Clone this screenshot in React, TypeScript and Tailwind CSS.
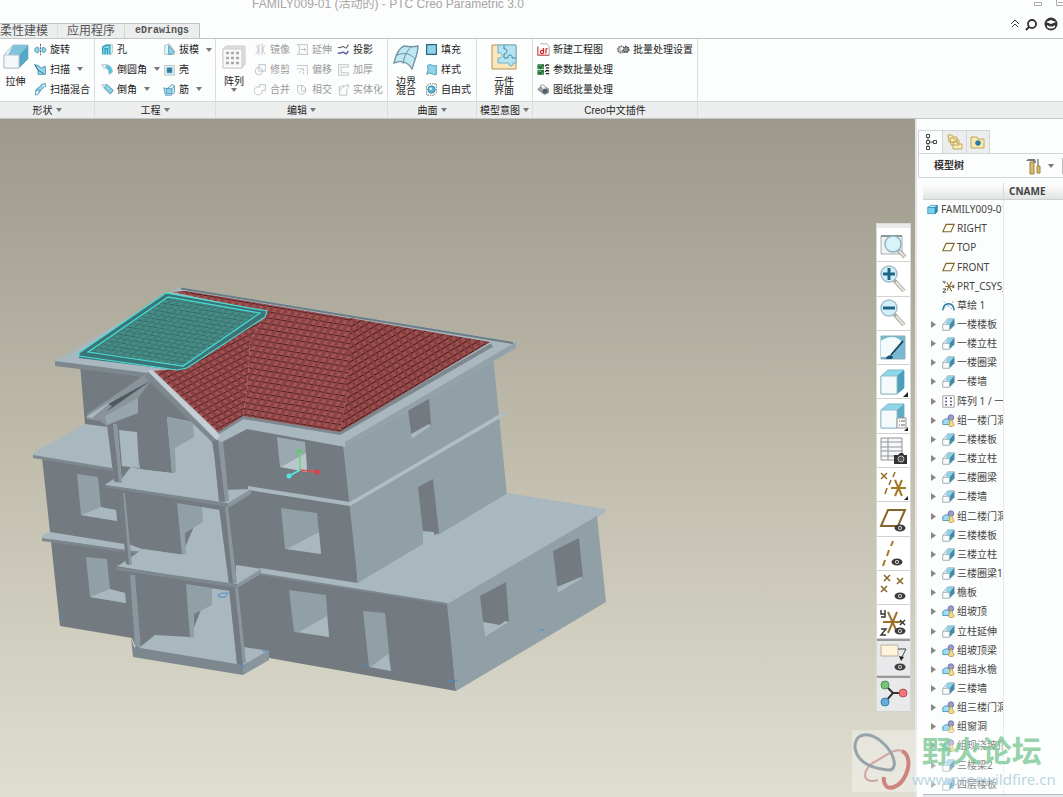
import type { ReactNode } from 'react';

type IconName = string;

const LINE = '#3f8fae';
const SKY = '#8fd4ea';
const PALE = '#dff4fb';
const GREY = '#b4b8ba';

// 16x16 glyphs used on the ribbon, in the tree and on its tabs
const glyphs: Record<IconName, ReactNode> = {
  revolve: (
    <>
      <path d="M1 8a3 3 0 0 1 5-2v5a3 3 0 0 1-5-3zM10 6a3 3 0 1 1 0 5z" fill={SKY} stroke={LINE} />
      <path d="M8 1v14" stroke="#444" strokeDasharray="3 1" />
    </>
  ),
  sweep: (
    <>
      <path d="M1 2l4 1 4 3 5-2v10H5V9z" fill={SKY} stroke={LINE} />
      <path d="M1 2l4 7 7 4" stroke="#24657f" />
    </>
  ),
  blend: (
    <>
      <path d="M2 10C3 5 8 6 9 2l5-1c1 5-5 5-6 9l-5 4z" fill={SKY} stroke={LINE} />
      <path d="M2 10l4-2v5l-4 2zM9 2l5-1v4" fill="#fff" stroke={LINE} />
    </>
  ),
  hole: (
    <>
      <path d="M2 4l4-2h8v10l-3 3" fill={PALE} stroke={GREY} />
      <path d="M2 14V5l4-2h5v11M5 14V7h3v7" fill={SKY} stroke="#24a0bd" strokeWidth="1.5" />
    </>
  ),
  round: (
    <>
      <path d="M1 2h6c5 1 7 5 7 9l-4 3C10 9 8 6 3 6z" fill={PALE} stroke={GREY} />
      <path d="M7 2c5 1 7 5 7 9l-4 3C10 9 8 7 5 5z" fill="#5fc3d8" />
    </>
  ),
  chamfer: (
    <>
      <path d="M1 2h6l8 7-4 5-8-8z" fill={PALE} stroke={GREY} />
      <path d="M7 2l8 7-3 4-8-7z" fill="#8cd8e3" stroke={LINE} />
    </>
  ),
  draft: (
    <>
      <path d="M2 3l6-2 6 9v4H2z" fill={PALE} stroke={GREY} />
      <path d="M7 3l7 8-4 3H7z" fill={SKY} stroke={LINE} />
    </>
  ),
  shell: (
    <>
      <path d="M2 3h12v12H2z" fill={PALE} stroke={GREY} />
      <path d="M5 6h6v6H5z" fill="#2f7f9c" stroke={LINE} />
    </>
  ),
  rib: (
    <>
      <path d="M1 6l4 1 6-5 3 1v9l-4 3H3z" fill={PALE} stroke={LINE} />
      <path d="M4 7h7v6H4zM11 7l3-3" fill={SKY} stroke={LINE} />
    </>
  ),
  mirror: <path d="M2 3c4 2 4 7 0 11M14 3c-4 2-4 7 0 11M6 1v14M10 1v14" stroke={GREY} />,
  trim: (
    <>
      <path d="M6 2h8v8H6z" stroke={GREY} />
      <circle cx="6" cy="10" r="4.5" stroke={GREY} />
    </>
  ),
  merge: <path d="M10 11a5 5 0 1 1-3-6V2h7v7h-4z" stroke={GREY} />,
  extend: <path d="M1 2h3v12H1M5 2h9v12H5M6 8h6M10 6l2 2-2 2" stroke={GREY} />,
  offset: (
    <>
      <path d="M1 3h13v12" stroke={GREY} />
      <path d="M1 7h8v8M4 12l6-6" stroke={GREY} strokeDasharray="3 1" />
    </>
  ),
  intersect: <path d="M2 3v5a5 5 0 1 0 9-2M2 3h4a6 6 0 0 1 6 7H7V3" stroke={GREY} />,
  project: (
    <>
      <path d="M1 5c4 3 5-3 8 0s3 0 5-3" stroke="#555" strokeWidth="1.3" />
      <path d="M1 12c4 3 5-3 8 0s3 0 5-2" stroke="#5f53a8" strokeWidth="1.8" />
    </>
  ),
  thicken: <path d="M14 2H2v13h12v-3H5V5h9z" stroke={GREY} />,
  solidify: <path d="M2 5c5 0 3-3 7-1l5-2v3l-2 3v7H3V5M3 8c4 0 3-3 6-4" stroke={GREY} />,
  fill: <path d="M2 2h12v12H2z" fill={SKY} stroke="#27677c" strokeWidth="1.5" />,
  style: <path d="M3 3c5-3 6 2 11 0v11c-4 2-6-4-12 0 2-4 2-8 1-11z" fill={SKY} stroke={LINE} />,
  freestyle: (
    <>
      <path d="M3 3l3-2h8v11l-3 3H2V3z" stroke="#666" strokeDasharray="2 1" />
      <circle cx="8" cy="8" r="4.5" fill="#5bb8d5" stroke="#297d9f" />
      <circle cx="7" cy="7" r="1.5" fill="#e4f9ff" />
    </>
  ),
  drawing: (
    <>
      <path d="M4 1h8l3 3v11H1V5" fill="#fff" stroke="#999" />
      <path d="M1 4v11h14" stroke="#c33" />
      <path d="M8 6v7M8 10a2 2 0 1 0 0 2M11 13V8c0-1 1-1 2-1" stroke="#d22" strokeWidth="1.5" />
    </>
  ),
  params: (
    <>
      <path d="M1 2h7v5H1zM1 9h7v5H1z" fill="#59b063" stroke="#28713a" />
      <path d="M2 4l2 2 4-4M2 11l2 2 4-4" stroke="#175a29" strokeWidth="1.5" />
      <path d="M10 4l2-2 3 1M10 11l2-2 3 1M11 6h4M11 13h4" stroke="#222" strokeWidth="1.5" />
    </>
  ),
  print: (
    <>
      <path d="M1 8l5-5 8 4v5l-5 2z" fill="#9ba1a6" stroke="#777" />
      <path d="M4 3l4-1 4 5-5 1z" fill="#e9f2f6" stroke="#999" />
      <circle cx="10" cy="10" r="3" fill="#4c5f6c" />
    </>
  ),
  gears: (
    <>
      <circle cx="5" cy="8" r="4" fill="#bbb" stroke="#777" strokeWidth="2" strokeDasharray="2 1" />
      <circle cx="11" cy="8" r="3.5" fill="#999" stroke="#444" strokeWidth="2" strokeDasharray="2 1" />
      <circle cx="6" cy="7" r="2" fill="#f5f5f5" />
    </>
  ),
  part: (
    <>
      <path d="M1 5l4-3h10l-3 3z" fill="#c4efff" stroke="#258cb4" />
      <path d="M1 5h11v9H1z" fill="#78cfee" stroke="#258cb4" />
      <path d="M12 5l3-3v9l-3 3z" fill="#278fb5" stroke="#257a9b" />
    </>
  ),
  plane: <path d="M5 3h10l-4 9H1z" fill="#fffdf4" stroke="#80672f" strokeWidth="1.4" />,
  csys: (
    <>
      <path d="M4 8h9M6 13l6-11M6 3l6 11" stroke="#8a6b27" strokeWidth="1.3" />
      <path d="M1 1l2 3 1-3M1 11h4l-4 4h4M13 6l2 4M15 6l-2 4" stroke="#333" />
    </>
  ),
  sketch: (
    <>
      <path d="M1 14c1-11 13-11 14 0" stroke="#267a9f" strokeWidth="1.8" />
      <path d="M2 3l12 11M14 3L2 12" stroke="#3c96b8" strokeDasharray="2 2" />
    </>
  ),
  extrude: (
    <>
      <path d="M1 8l6-7h8v8l-6 6H1z" fill="#f3f8fa" stroke="#93a4ab" />
      <path d="M7 1h8L9 8H4z" fill="#8fd0e6" />
      <path d="M15 1v8l-6 6V8z" fill="#3f8cab" />
      <path d="M1 8h8v7H1z" fill="#fbfdfd" stroke="#a8b5ba" />
    </>
  ),
  pattern: (
    <>
      <path d="M1 1h14v14H1z" fill="#fff" stroke="#8c8c98" />
      <path d="M4 4h2M10 4h2M4 8h2M10 8h2M4 12h2M10 12h2" stroke="#3a3b72" strokeWidth="2" />
    </>
  ),
  group: (
    <>
      <path d="M1 8l3-2h6v7H1z" fill="#9fdcf3" stroke="#3989aa" />
      <circle cx="11" cy="4.5" r="3.5" fill="#989cd5" stroke="#676ca6" />
      <path d="M11 5l4 9c-2 2-6 2-7 0z" fill="#f2dc8d" stroke="#b7984d" />
    </>
  ),
};

interface GlyphProps {
  name: IconName;
  className?: string;
}

function Glyph({ name, className = 'h-[13px] w-[13px]' }: GlyphProps) {
  return (
    <svg viewBox="0 0 16 16" className={`shrink-0 ${className}`} fill="none" aria-hidden="true">
      {glyphs[name]}
    </svg>
  );
}

function Caret() {
  return (
    <svg viewBox="0 0 6 4" className="h-1 w-1.5 shrink-0" aria-hidden="true">
      <path d="M0 0h6L3 4z" fill="#777" />
    </svg>
  );
}

interface Command {
  icon: IconName;
  label: string;
  menu?: boolean;
  off?: boolean;
}

function CommandColumn({ items, className = '' }: { items: Command[]; className?: string }) {
  return (
    <div className={`grid h-[60px] shrink-0 grid-rows-3 pt-px ${className}`}>
      {items.map((item) => (
        <button
          key={item.label}
          type="button"
          disabled={item.off}
          className="flex items-center gap-[3px] whitespace-nowrap text-[#222] disabled:text-[#9a9a9a]"
        >
          <Glyph name={item.icon} />
          <span>{item.label}</span>
          {item.menu && (
            <span className="ml-1">
              <Caret />
            </span>
          )}
        </button>
      ))}
    </div>
  );
}

interface BigCommandProps {
  lines: string[];
  menu?: boolean;
  className: string;
  children: ReactNode;
}

function BigCommand({ lines, menu, className, children }: BigCommandProps) {
  return (
    <button type="button" className={`flex shrink-0 flex-col items-center pt-[5px] leading-[9px] text-[#222] ${className}`}>
      <svg viewBox="0 0 26 26" className="h-[26px] w-[26px]" fill="none" aria-hidden="true">
        {children}
      </svg>
      <span className="mt-[7px]">
        {lines.map((line) => (
          <span key={line} className="block">
            {line}
          </span>
        ))}
      </span>
      {menu && (
        <span className="mt-0.5">
          <Caret />
        </span>
      )}
    </button>
  );
}

interface RibbonGroupProps {
  title: string;
  menu?: boolean;
  className: string;
  children: ReactNode;
}

function RibbonGroup({ title, menu = true, className, children }: RibbonGroupProps) {
  return (
    <section className={`flex shrink-0 flex-col border-r border-[#dadede] ${className}`}>
      <div className="flex h-[62px]">{children}</div>
      <div className="flex h-[17px] items-center justify-center gap-[3px] border-t border-[#d4d8d8] bg-[#eceeee] whitespace-nowrap text-[#222]">
        {title}
        {menu && <Caret />}
      </div>
    </section>
  );
}

function Ribbon() {
  return (
    <div className="flex border-t border-b border-[#c2c6c6] bg-[#fcfdfd]">
      <RibbonGroup title="形状" className="w-[95px]">
        <BigCommand lines={['拉伸']} className="w-[31px]">
          <path d="M1 11L10 1h15v14l-9 9H1z" fill="#e8f6fb" stroke="#a8c3cc" />
          <path d="M10 1h15l-9 10H5z" fill="#7fc3dc" />
          <path d="M25 1v14l-9 9V11z" fill="#55a9c8" />
          <path d="M1 11h15v13H1z" fill="#f4f7f8" stroke="#b9c6cb" />
        </BigCommand>
        <CommandColumn
          className="ml-[3px]"
          items={[
            { icon: 'revolve', label: '旋转' },
            { icon: 'sweep', label: '扫描', menu: true },
            { icon: 'blend', label: '扫描混合' },
          ]}
        />
      </RibbonGroup>
      <RibbonGroup title="工程" className="w-[121px]">
        <CommandColumn
          className="ml-1.5 w-[62px]"
          items={[
            { icon: 'hole', label: '孔' },
            { icon: 'round', label: '倒圆角', menu: true },
            { icon: 'chamfer', label: '倒角', menu: true },
          ]}
        />
        <CommandColumn
          items={[
            { icon: 'draft', label: '拔模', menu: true },
            { icon: 'shell', label: '壳' },
            { icon: 'rib', label: '筋', menu: true },
          ]}
        />
      </RibbonGroup>
      <RibbonGroup title="编辑" className="w-[172px]">
        <BigCommand lines={['阵列']} menu className="w-9">
          <path d="M2 5l3-3h19v18l-3 4H2z" fill="#ddd" stroke="#ccc" />
          <path d="M2 5h19v19H2z" fill="#f8f8f8" stroke="#ccc" />
          <path d="M5 9h3m2 0h3m2 0h3M5 14h3m2 0h3m2 0h3M5 19h3m2 0h3m2 0h3" stroke="#aaa" strokeWidth="2.5" />
        </BigCommand>
        <CommandColumn
          className="ml-0.5 w-[42px]"
          items={[
            { icon: 'mirror', label: '镜像', off: true },
            { icon: 'trim', label: '修剪', off: true },
            { icon: 'merge', label: '合并', off: true },
          ]}
        />
        <CommandColumn
          className="w-[41px]"
          items={[
            { icon: 'extend', label: '延伸', off: true },
            { icon: 'offset', label: '偏移', off: true },
            { icon: 'intersect', label: '相交', off: true },
          ]}
        />
        <CommandColumn
          items={[
            { icon: 'project', label: '投影' },
            { icon: 'thicken', label: '加厚', off: true },
            { icon: 'solidify', label: '实体化', off: true },
          ]}
        />
      </RibbonGroup>
      <RibbonGroup title="曲面" className="w-[89px]">
        <BigCommand lines={['边界', '混合']} className="w-9">
          <path d="M1 19C3 10 6 4 11 2c5 1 10 1 14 0 0 8-3 13-6 23-4-7-10-9-18-6z" fill="#bfe7f4" stroke="#7697a2" strokeWidth="1.4" />
          <path d="M4 11c8-3 14-1 18 4M18 3c-5 5-7 10-8 17" stroke="#6c8d99" />
        </BigCommand>
        <CommandColumn
          className="ml-px"
          items={[
            { icon: 'fill', label: '填充' },
            { icon: 'style', label: '样式' },
            { icon: 'freestyle', label: '自由式' },
          ]}
        />
      </RibbonGroup>
      <RibbonGroup title="模型意图" className="w-14">
        <BigCommand lines={['元件', '界面']} className="w-[54px]">
          <path d="M1 1h24v24H1z" fill="#fbe6bd" stroke="#b9924d" />
          <path d="M7 1h18v18h-3c1 4-5 4-4 0H7v-5c5 1 5-6 0-5z" fill="#b5e3f2" stroke="#6db0c8" />
          <path d="M13 1v4c4-1 4 5 0 5v4h4c-1-4 5-4 4 0h4" stroke="#3e86a3" />
        </BigCommand>
      </RibbonGroup>
      <RibbonGroup title="Creo中文插件" menu={false} className="w-[165px]">
        <CommandColumn
          className="ml-1 w-20"
          items={[
            { icon: 'drawing', label: '新建工程图' },
            { icon: 'params', label: '参数批量处理' },
            { icon: 'print', label: '图纸批量处理' },
          ]}
        />
        <CommandColumn items={[{ icon: 'gears', label: '批量处理设置' }]} />
      </RibbonGroup>
      <div className="flex flex-1 flex-col justify-end">
        <div className="h-[17px] border-t border-[#d4d8d8] bg-[#eceeee]" />
      </div>
    </div>
  );
}

function Header() {
  return (
    <header className="flex h-[38px] shrink-0 flex-col">
      <div className="flex h-2 items-center pl-[252px] text-[12px] leading-none whitespace-nowrap text-[#a5a5a5]">
        <h1 className="flex-1">FAMILY009-01 (活动的) - PTC Creo Parametric 3.0</h1>
        <svg viewBox="0 0 34 8" className="h-2 w-[34px]" fill="none" stroke="#aaa" aria-hidden="true">
          <path d="M5.5 2.5h7v3h-7zM27.5 0v5.5h7M29 2.5h5" />
        </svg>
      </div>
      <div className="flex flex-1 items-end justify-between">
        <nav className="flex h-[15px] border-t border-r border-[#bfc3c3] bg-[#eceeee] text-[12px] leading-[14px] whitespace-nowrap text-[#555]">
          <a href="#flex" className="w-[58px] border-r border-[#dcdfdf]">
            柔性建模
          </a>
          <a href="#apps" className="w-[67px] border-r border-[#d2d6d6] text-center">
            应用程序
          </a>
          <a href="#edrawings" className="w-[74px] text-center font-['Liberation_Mono',monospace] text-[10px] font-bold">
            eDrawings
          </a>
        </nav>
        <svg viewBox="0 0 54 20" className="mb-1 h-5 w-[54px]" fill="none" aria-hidden="true">
          <path d="M2 10l4-4 4 4M3 13l3-3 3 3" stroke="#444" />
          <circle cx="23" cy="10" r="4" stroke="#333" strokeWidth="1.8" />
          <path d="M20 13l-3 3" stroke="#333" strokeWidth="2" />
          <circle cx="42" cy="10" r="6.5" fill="#333" />
          <path d="M37 8l5-2 5 2-5 2zM38 11c3 2 6 2 8 0v2c-2 2-6 2-8 0z" fill="#fff" />
        </svg>
      </div>
    </header>
  );
}

function Eye({ x, y }: { x: number; y: number }) {
  return (
    <g>
      <ellipse cx={x} cy={y} rx="5.5" ry="3.5" fill="#3d3a3a" />
      <circle cx={x} cy={y} r="2" fill="#ddd" />
      <circle cx={x} cy={y} r="1" fill="#222" />
    </g>
  );
}

function Magnifier() {
  return (
    <>
      <path d="M15 16l10 11" stroke="#a9a9a0" strokeWidth="4" />
      <path d="M17 18l8 9" stroke="#e8e4d6" strokeWidth="2" />
      <circle cx="10" cy="10" r="8" fill="#d3f0f9" stroke="#a4bfc8" strokeWidth="1.5" />
    </>
  );
}

const tools: { label: string; pressed?: boolean; art: ReactNode }[] = [
  {
    label: '重新调整',
    art: (
      <>
        <path d="M2 6h21v18H2z" fill="#eef2f3" stroke="#aab2b5" />
        <path d="M2 6h21" stroke="#8c969b" strokeWidth="2" />
        <path d="M19 20l7 7" stroke="#a9a9a0" strokeWidth="4" />
        <path d="M20 21l6 6" stroke="#e8e4d6" strokeWidth="2" />
        <circle cx="14" cy="14" r="8" fill="#d9f3fa" stroke="#8fb6c2" strokeWidth="1.5" />
      </>
    ),
  },
  {
    label: '放大',
    art: (
      <>
        <Magnifier />
        <path d="M4 10h12M10 4v12" stroke="#1d6487" strokeWidth="3" />
      </>
    ),
  },
  {
    label: '缩小',
    art: (
      <>
        <Magnifier />
        <path d="M4 10h12" stroke="#1d6487" strokeWidth="3" />
      </>
    ),
  },
  {
    label: '重画',
    art: (
      <>
        <path d="M2 4h24v23H2z" fill="#78b9d1" stroke="#8badba" />
        <path d="M2 9c8-6 16-5 21 1L12 25H2z" fill="#f4fbfd" />
        <path d="M24 9L12 23" stroke="#153b50" strokeWidth="1.8" />
        <path d="M7 27c0-4 6-5 7-2l-1 2z" fill="#195574" />
      </>
    ),
  },
  {
    label: '显示样式',
    art: (
      <>
        <path d="M2 9l7-6h16v18l-7 6H2z" fill="#8ed6e9" stroke="#7bb7c8" />
        <path d="M18 9l7-6v18l-7 6z" fill="#4a9dbb" />
        <path d="M2 9h16v18H2z" fill="#f4fafc" stroke="#9dbcc6" />
        <path d="M29 25v5h-5z" fill="#222" />
      </>
    ),
  },
  {
    label: '已保存方向',
    art: (
      <>
        <path d="M2 9l7-6h16v18l-7 6H2z" fill="#8ed6e9" stroke="#7bb7c8" />
        <path d="M18 9l7-6v18l-7 6z" fill="#5fabc4" />
        <path d="M2 9h16v18H2z" fill="#f4fafc" stroke="#9dbcc6" />
        <path d="M18 17h9v10h-9z" fill="#f7f7f7" stroke="#999" />
        <path d="M20 20h1m1 0h4m-6 4h1m1 0h4" stroke="#666" />
        <path d="M29 26v4h-4z" fill="#222" />
      </>
    ),
  },
  {
    label: '视图管理器',
    art: (
      <>
        <path d="M2 3h21v22H2zM2 7h21M2 12h21M2 16h21M2 21h21M9 3v22" fill="#f8f8f8" stroke="#8d9599" />
        <path d="M15 20h4l2-2h3l1 2h3v9H15z" fill="#343434" />
        <circle cx="22" cy="24" r="3" fill="#555" stroke="#bbb" />
      </>
    ),
  },
  {
    label: '基准显示过滤器',
    art: (
      <>
        <path d="M2 3l6 6M8 3L2 9" stroke="#8f6c2d" strokeWidth="1.5" />
        <path d="M16 2l-2 5m-2 3l-2 5m-2 3l-2 6" stroke="#8f6c2d" strokeWidth="1.5" />
        <path d="M12 18h15M16 10l7 16M23 10l-7 16" stroke="#a57925" strokeWidth="2" />
        <path d="M29 26v4h-4z" fill="#222" />
      </>
    ),
  },
  {
    label: '平面显示',
    art: (
      <>
        <path d="M9 6h17l-7 16H2z" stroke="#85662a" strokeWidth="2" />
        <Eye x={21} y={24} />
      </>
    ),
  },
  {
    label: '轴显示',
    art: (
      <>
        <path d="M14 3l-2 5m-2 4l-2 6m-2 4l-2 6" stroke="#a57925" strokeWidth="2" />
        <Eye x={18} y={24} />
      </>
    ),
  },
  {
    label: '点显示',
    art: (
      <>
        <path d="M5 3l6 6M11 3L5 9M18 6l6 6M24 6l-6 6M2 14l6 6M8 14l-6 6" stroke="#85662a" strokeWidth="1.5" />
        <Eye x={21} y={24} />
      </>
    ),
  },
  {
    label: '坐标系显示',
    art: (
      <>
        <path d="M4 15h18M9 5l9 20M18 5L9 26" stroke="#9a7329" strokeWidth="2" />
        <path d="M2 3v4h4M6 3v7H2M21 13l5 5M26 13l-5 5M2 22h5l-5 6h5" stroke="#333" strokeWidth="1.4" />
        <Eye x={21} y={24} />
      </>
    ),
  },
  {
    label: '注释显示',
    pressed: true,
    art: (
      <>
        <path d="M2 2h17v11H2z" fill="#fff4db" stroke="#b7b0a0" />
        <path d="M19 6h8l-5 10" stroke="#444" />
        <path d="M20 13l2 5 3-4z" fill="#222" />
        <Eye x={21} y={24} />
      </>
    ),
  },
  {
    label: '旋转中心',
    pressed: true,
    art: (
      <>
        <path d="M6 6l8 8h11M14 14l-8 9" stroke="#333" strokeWidth="2" />
        <circle cx="6" cy="6" r="4" fill="#76c474" stroke="#4c9353" />
        <circle cx="24" cy="14" r="4" fill="#f1777a" stroke="#bd4e53" />
        <circle cx="6" cy="23" r="4" fill="#61b0df" stroke="#3d7da3" />
      </>
    ),
  },
];

function ViewToolbar() {
  return (
    <div className="absolute top-[104px] right-1 flex h-[490px] w-[35px] flex-col border border-[#d9dad6] bg-white" role="toolbar">
      <div className="h-1 shrink-0 bg-[#e9eaea]" />
      {tools.map((tool) => (
        <button
          key={tool.label}
          type="button"
          aria-label={tool.label}
          aria-pressed={tool.pressed ?? false}
          className="flex min-h-0 flex-1 items-center justify-center border-b border-[#d1d3d1] bg-white aria-pressed:border-t-2 aria-pressed:border-t-[#999] aria-pressed:bg-[#e7e9ea]"
        >
          <svg viewBox="0 0 30 30" className="h-[30px] w-[30px]" fill="none" aria-hidden="true">
            {tool.art}
          </svg>
        </button>
      ))}
    </div>
  );
}

interface TilesProps {
  id: string;
  base: string;
  dark: string;
  shine: string;
  matrix: string;
}

function Tiles({ id, base, dark, shine, matrix }: TilesProps) {
  return (
    <pattern id={id} width="7" height="6" patternUnits="userSpaceOnUse" patternTransform={matrix}>
      <path d="M0 0h7v6H0z" fill={base} />
      <path d="M2.5 1v5" stroke={shine} strokeWidth="2" />
      <path d="M6 0v6" stroke={dark} strokeWidth="1" opacity="0.3" />
      <path d="M0 0.5h7" stroke={dark} strokeWidth="1" strokeDasharray="5 2" opacity="0.85" />
    </pattern>
  );
}

const DARK = '#737b80';
const MID = '#91a0a6';
const LIGHT = '#a9b7bf';
const EDGE = '#7d888e';

function HouseModel() {
  return (
    <svg viewBox="0 119 915 678" className="h-full w-full" role="img" aria-label="FAMILY009-01">
      <defs>
        <Tiles id="tiles-gable" base="#934547" dark="#3c1718" shine="#a35553" matrix="matrix(.89 -.46 .72 .7 0 0)" />
        <Tiles id="tiles-main" base="#964849" dark="#3c1718" shine="#a65856" matrix="matrix(1 .17 -.5 .9 0 0)" />
        <Tiles id="tiles-hip" base="#904445" dark="#351415" shine="#a05150" matrix="matrix(.86 -.51 .55 .83 0 0)" />
        <Tiles id="tiles-picked" base="#43857f" dark="#2b5f60" shine="#4b8f88" matrix="matrix(1 .17 -.8 .58 0 0)" />
      </defs>

      {/* front walls */}
      <path
        d="M80 364L85 424 42 457 60 626 132 638 137 650 244 666 269 658 456 691 448 603 358 585 345 425 240 415 150 372z"
        fill={DARK}
      />

      {/* left wing roof and string course */}
      <path d="M33 453L85 424 108 427 136 432 140 470 118 471 33 456z" fill={LIGHT} />
      <path d="M33 455L112 468V471L33 458z" fill={EDGE} />
      <path d="M42 535L50 532 131 545 142 549 140 552 42 538z" fill={LIGHT} />
      <path d="M42 538l98 14v2l-98-13z" fill={EDGE} />
      <path d="M77 474l21 3 3 31 15 2 1 11-36-6z" fill={MID} />
      <path d="M81 515l20-8 15 3 1 11z" fill={LIGHT} />
      <path d="M86 557l21 2 3 31 15 3 1 10-36-6z" fill={MID} />
      <path d="M90 597l20-8 15 4 1 10z" fill={LIGHT} />

      {/* right side walls */}
      <path d="M343 445L493 356 507 495 358 583z" fill={MID} />
      <path d="M350 502L500 414 507 411V414L350 506z" fill="#b0bec5" />
      <path d="M248 486L350 502V506L248 490z" fill={LIGHT} />
      <path d="M260 568L358 583 508 493 605 509V513L447 604 260 574z" fill={LIGHT} />
      <path d="M260 573L447 603 448 605 260 575z" fill={EDGE} />
      <path d="M447 604L597 516 606 602 456 691z" fill={MID} />
      <path d="M418 487l15-8 6 54-6 2-10-3z" fill={DARK} />
      <path d="M423 531l11 1v3l5-1-16 11z" fill={LIGHT} />
      <path d="M408 410l21-15 2 31-19 13z" fill={DARK} />
      <path d="M411 434l18-10 2 2-19 13z" fill={LIGHT} />
      <path d="M480 596l26-14 3 40-24 15z" fill={DARK} />
      <path d="M483 622l17 3 5-4 4 1-24 15z" fill={LIGHT} />
      <path d="M553 551l26-13 4 40-25 15z" fill={DARK} />
      <path d="M557 587l24-10 2 1-25 15z" fill={LIGHT} />

      {/* front windows and door */}
      <path d="M277 437l28 5 2 30-27-5z" fill="#9ba8af" />
      <path d="M281 467l25-14 1 19z" fill="#bac6ce" />
      <path d="M281 508l36 5 4 41-36-5z" fill={MID} />
      <path d="M287 549l32-17 2 22z" fill={LIGHT} />
      <path d="M289 590l37 5 3 42-35-5z" fill={MID} />
      <path d="M299 632l28-16 2 21z" fill={LIGHT} />
      <path d="M363 611l22 2 6 58-22-4z" fill={MID} />
      <path d="M371 667l17-13 3 17z" fill={LIGHT} />

      {/* entrance bay, upper level */}
      <path d="M167 417l27 5 18 20 10 60-117-17 24-17 43 5z" fill={LIGHT} />
      <path d="M167 417l26 5 1 15-19 11 1 24-4 2z" fill={MID} />
      <path d="M117 424l19-11 2 19 1 37-8-2-9 16z" fill={DARK} />
      <path d="M119 430l18 2 2 36-17-2z" fill={LIGHT} />
      <path d="M105 484l15-3 10-13 42 5 50 17 30-1-24 16z" fill={LIGHT} />
      <path d="M105 485l123 18v4l-123-20z" fill={EDGE} />
      <path d="M228 503l23-14v5l-23 14z" fill="#89969c" />
      {/* middle level */}
      <path d="M202 507l18 3 10 74-112-18 25-17 39 6z" fill={LIGHT} />
      <path d="M177 503l25 4 1 15-18 11 1 21-4 1z" fill={MID} />
      <path d="M116 566l15-3 11-14 44 6 50 20v-10l26 4-25 17z" fill={LIGHT} />
      <path d="M116 567l121 17v4l-121-18z" fill={EDGE} />
      <path d="M237 584l24-15v5l-24 14z" fill="#89969c" />
      {/* ground level */}
      <path d="M210 588l20 3 10 75-102-18 6-4 11-9 35 2z" fill={LIGHT} />
      <path d="M186 584l26 4v17l-18 9v23l-4 1z" fill={MID} />
      <path d="M238 646l31 5-26 15z" fill={LIGHT} />
      <path d="M131 637l3 10 109 18v10l-110-18z" fill={EDGE} />
      <path d="M243 665l26-15v10l-26 15z" fill="#89969c" />
      {/* bay columns */}
      <path d="M107 424h10l5 59-8-1zM120 493h5l7 72-6-1zM130 575h5l6 73-6-2z" fill="#8a979e" />
      <path d="M107 424h6l6 58-5-1zM120 493h3l6 72-3-1z" fill={DARK} />
      <path d="M213 441h10l6 60-10 1zM219 507h9l9 76-8 2zM229 588h9l8 75-9 1z" fill="#8a979e" />
      <path d="M213 441h5l7 61-6-1zM219 507h6l8 77-4-1zM229 588h6l8 77-6-1z" fill={DARK} />

      {/* roof slab */}
      <path d="M55 361L180 287 516 342V348L345 447 247 429 222 442 212 438 148 372 146 377 55 365z" fill={LIGHT} />
      <path d="M55 361L148 373 145 377 55 366z" fill={EDGE} />
      <path d="M181 288.5L513 343" stroke="#6d7b83" strokeWidth="2" />
      <path d="M345 447L516 348V342L345 442z" fill="#93a1a8" />
      <path d="M217 433L243 417 340 433 492 345" stroke="#7d898f" strokeWidth="4" fill="none" />

      {/* gable */}
      <path d="M146 374L87 414V419L100 421 107 426 138 398 152 380z" fill="#899399" />
      <path d="M86 417L116 398 92 418z" fill={LIGHT} />
      <path d="M152 380L106 412 112 406 108 404z" fill="#50595e" />
      <path d="M105 416L138 398V413L107 425z" fill="#98a5ac" />
      <path d="M145 377L148 372 216 440 212 442z" fill={EDGE} />
      <path d="M148 371L152 370 220 435 217 440z" fill="#c4ced3" />

      {/* tiled faces */}
      <path d="M154 371L183 368 266 312 250 342 247 390 243 416 218 432z" fill="url(#tiles-gable)" />
      <path d="M172 292L186 291 355 319 346 400 340 432 243 416 247 390 250 342 266 312z" fill="url(#tiles-main)" />
      <path d="M350 318L490 342 340 432 346 400 350 345z" fill="url(#tiles-hip)" />

      {/* picked face */}
      <path d="M79 353L165 293 267 311 265 316 185 369 176 370 79 358z" fill="#3b7476" />
      <path d="M88 352L168 297 259 313 182 366z" fill="url(#tiles-picked)" />
      <path
        d="M79 353L166 293 267 311 265 317 187 368 177 370 79 356zM88 352L168 297 260 313 183 366z"
        fill="none"
        stroke="#48ddd5"
        strokeWidth="1.2"
      />

      {/* spin centre */}
      <g strokeWidth="1.5">
        <path d="M300 470V451" stroke="#5ade68" />
        <path d="M300 470l17 2" stroke="#e54b52" />
        <path d="M300 470l-11 6" stroke="#5ce6e8" />
      </g>
      <circle cx="299" cy="451" r="2" fill="#48d857" />
      <circle cx="317" cy="472" r="2.5" fill="#e33d45" />
      <circle cx="289" cy="476" r="2.5" fill="#50e6e7" />
      <path
        d="M218 595l4-2h6l-3 4h-6zM60 616h4M135 648h4M240 666h6M262 651h6M361 666h6M448 681h10M539 630h5"
        stroke="#4d8fc7"
        fill="none"
      />
    </svg>
  );
}

interface TreeNode {
  icon: IconName;
  label: string;
}

const nodes: TreeNode[] = [
  { icon: 'plane', label: 'RIGHT' },
  { icon: 'plane', label: 'TOP' },
  { icon: 'plane', label: 'FRONT' },
  { icon: 'csys', label: 'PRT_CSYS_DEF' },
  { icon: 'sketch', label: '草绘 1' },
  { icon: 'extrude', label: '一楼楼板' },
  { icon: 'extrude', label: '一楼立柱' },
  { icon: 'extrude', label: '一楼圈梁' },
  { icon: 'extrude', label: '一楼墙' },
  { icon: 'pattern', label: '阵列 1 / 一楼' },
  { icon: 'group', label: '组一楼门洞' },
  { icon: 'extrude', label: '二楼楼板' },
  { icon: 'extrude', label: '二楼立柱' },
  { icon: 'extrude', label: '二楼圈梁' },
  { icon: 'extrude', label: '二楼墙' },
  { icon: 'group', label: '组二楼门洞' },
  { icon: 'extrude', label: '三楼楼板' },
  { icon: 'extrude', label: '三楼立柱' },
  { icon: 'extrude', label: '三楼圈梁1' },
  { icon: 'extrude', label: '檐板' },
  { icon: 'group', label: '组坡顶' },
  { icon: 'extrude', label: '立柱延伸' },
  { icon: 'group', label: '组坡顶梁' },
  { icon: 'group', label: '组挡水檐' },
  { icon: 'extrude', label: '三楼墙' },
  { icon: 'group', label: '组三楼门洞' },
  { icon: 'group', label: '组窗洞' },
  { icon: 'group', label: '组现浇坡顶' },
  { icon: 'extrude', label: '三楼梁2' },
  { icon: 'extrude', label: '四层楼板' },
];

const leafIcons = ['plane', 'csys', 'sketch'];

function ModelTree() {
  return (
    <table className="mt-[5px] ml-1.5 flex min-h-0 flex-1 flex-col text-left text-[#444]">
      <thead className="block">
        <tr className="flex h-[17px] border-b border-[#cfd2d2] bg-linear-to-b from-white to-[#e2e4e4]">
          <th className="w-[81px] border-r border-[#d8dada]" aria-label="模型树" />
          <th className="flex-1 pl-[5px] text-[10px] leading-4 font-bold text-[#444]">CNAME</th>
        </tr>
      </thead>
      <tbody className="flex min-h-0 flex-1 flex-col">
        <tr className="flex min-h-0 flex-1">
          <td className="flex w-[81px] items-center gap-[3px] overflow-hidden border-r border-[#e8eaea] pl-1 whitespace-nowrap">
            <Glyph name="part" className="h-[11px] w-[11px]" />
            FAMILY009-01
          </td>
          <td className="flex-1" />
        </tr>
        {nodes.map((node) => (
          <tr key={node.label} className="flex min-h-0 flex-1">
            <td className="flex w-[81px] items-center overflow-hidden border-r border-[#e8eaea] pl-2 whitespace-nowrap">
              <svg viewBox="0 0 5 7" className="mr-1.5 h-[7px] w-[5px] shrink-0" aria-hidden="true">
                {!leafIcons.includes(node.icon) && <path d="M0 0l5 3.5L0 7z" fill="#888" />}
              </svg>
              <Glyph name={node.icon} />
              <span className="ml-0.5">{node.label}</span>
            </td>
            <td className="flex-1" />
          </tr>
        ))}
      </tbody>
    </table>
  );
}

function TreePanel() {
  return (
    <aside className="flex w-[148px] shrink-0 flex-col border-l-2 border-[#e4e4ec] bg-[#fcfdfd] pt-[11px] font-['Noto_Sans','Noto_Sans_CJK_SC',sans-serif]">
      <div className="ml-px flex h-6 shrink-0 border-b border-[#d3d6d6]">
        <button type="button" aria-label="模型树" className="flex w-6 items-center justify-center border-t border-l border-[#d3d6d6]">
          <svg viewBox="0 0 12 16" className="h-4 w-3" fill="none" stroke="#444" aria-hidden="true">
            <path d="M1.5.5h3v3h-3zM1.5 6.500h3v3h-3zM1.5 12.5h3v3h-3zM8.500 6.500h3v3h-3zM3 3.500v3m0 3v3M4.500 8h4" />
          </svg>
        </button>
        <button type="button" aria-label="文件夹浏览器" className="flex w-6 items-center justify-center border-t border-l border-[#d3d6d6] bg-[#eceeee]">
          <svg viewBox="0 0 16 16" className="h-4 w-4" fill="#f8ebb6" stroke="#c0a75f" aria-hidden="true">
            <path d="M1 1h4l1 2h4v5H2zM3 4h4l1 2h4v5H4zM6 8h4l1 2h4v5H6z" />
          </svg>
        </button>
        <button type="button" aria-label="收藏夹" className="flex w-6 items-center justify-center border-x border-t border-[#d3d6d6] bg-[#eceeee]">
          <svg viewBox="0 0 16 16" className="h-4 w-4" fill="none" aria-hidden="true">
            <path d="M1 3h6l1 2h6v9H1z" fill="#f7e8b0" stroke="#c0a75f" />
            <path d="M5 9h6M8 6v6M6 7l4 4M10 7l-4 4" stroke="#267a9f" strokeWidth="1.3" />
          </svg>
        </button>
      </div>
      <div className="ml-px flex h-6 shrink-0 items-center border-b border-l border-[#d3d6d6] pl-[15px] whitespace-nowrap">
        <h2 className="flex-1 font-bold text-[#333]">模型树</h2>
        <svg viewBox="0 0 16 18" className="mr-[7px] h-[18px] w-4" fill="none" aria-hidden="true">
          <path d="M5 5h4v12H5z" fill="#dcb96c" stroke="#a08145" />
          <path d="M1 4l2-2h7l1 4H9L8 4H3z" fill="#777" />
          <path d="M13 2v8" stroke="#888" strokeWidth="1.5" />
          <path d="M12 9h3v7h-3z" fill="#dcb96c" stroke="#a08145" />
        </svg>
        <Caret />
        <span className="ml-2 h-4 w-px bg-[#bbb]" />
      </div>
      <ModelTree />
      <div className="ml-1.5 flex h-[3px] shrink-0 border-t border-[#b9bcbc] bg-[#e4e6ea]" />
    </aside>
  );
}

function Watermark() {
  return (
    <div className="pointer-events-none absolute right-[3px] bottom-[5px] flex h-[62px] w-[208px] bg-white/35">
      <svg viewBox="0 0 60 62" className="h-[62px] w-[60px] shrink-0" fill="none" aria-hidden="true">
        <path d="M26 50C8 55 10 38 24 31c11-6 19-13 26-10" stroke="#cfa5a2" strokeWidth="2" />
        <path d="M50 21c12 5 6 31-8 36-8 3-11-4-10-10" stroke="#cf8480" strokeWidth="4" />
        <path d="M3 18C2 2 18 1 31 13s15 28 5 27S6 36 3 18z" stroke="#96a3a8" strokeWidth="3" />
      </svg>
      <div className="flex flex-col items-end pt-1 font-['Noto_Sans','Noto_Sans_CJK_SC',sans-serif] leading-none whitespace-nowrap">
        <span className="mr-[14px] font-['Noto_Sans_CJK_SC',sans-serif] text-[30px] font-bold text-[#7cc896]/80">野火论坛</span>
        <span className="mt-2 text-[15px] text-[#a9cbd9]/80">www.proewildfire.cn</span>
      </div>
    </div>
  );
}

export default function App() {
  return (
    <div className="relative flex h-screen flex-col overflow-hidden bg-[#fcfdfd] font-['Liberation_Sans','Noto_Sans_CJK_SC',sans-serif] text-[10px]">
      <Header />
      <Ribbon />
      <div className="flex min-h-0 flex-1">
        <main className="relative min-w-0 flex-1 bg-linear-to-b from-[#9c998b] via-[#c1bdad] to-[#dfded1]">
          <HouseModel />
          <ViewToolbar />
        </main>
        <TreePanel />
      </div>
      <Watermark />
    </div>
  );
}
